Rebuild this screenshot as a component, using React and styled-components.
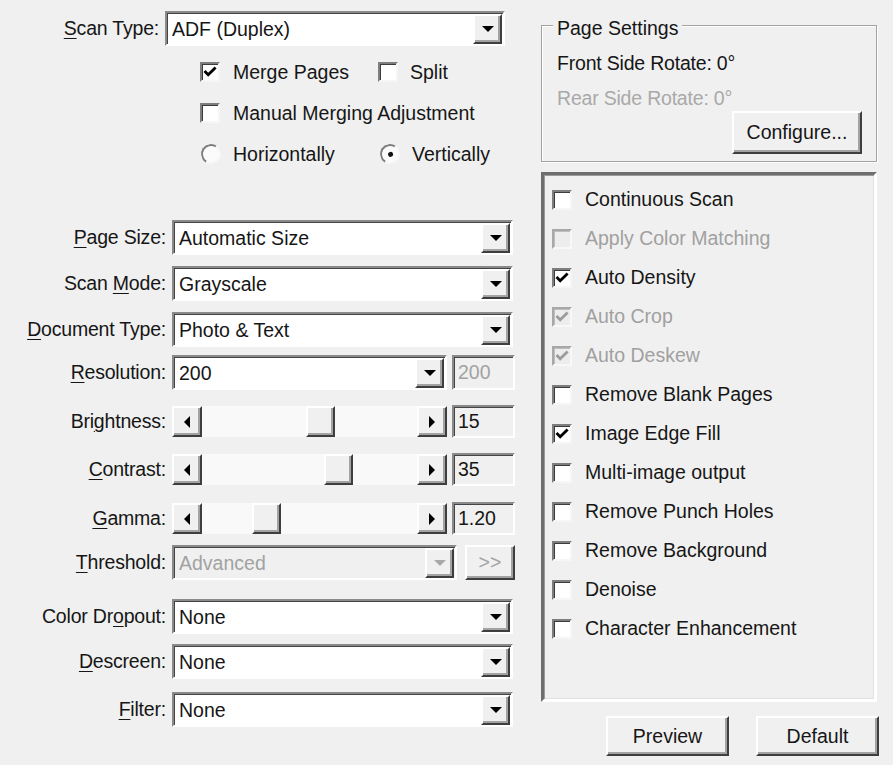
import React from 'react';
import styled, { createGlobalStyle, css } from 'styled-components';

const GlobalStyle = createGlobalStyle`
  html, body {
    margin: 0;
    padding: 0;
    background: #f0f0f0;
  }
  body {
    font-family: "Liberation Sans", Arial, sans-serif;
    font-size: 19.5px;
    color: #161616;
  }
`;

const raised = css`
  box-sizing: border-box;
  background: #f0f0f0;
  border: 2px solid;
  border-color: #ffffff #3e3e3e #3e3e3e #ffffff;
  box-shadow: inset -2px -2px 0 #a3a3a3;
`;

const sunken = css`
  box-sizing: border-box;
  border: 2px solid;
  border-color: #8a8a8a #ffffff #ffffff #8a8a8a;
  box-shadow: inset 1px 1px 0 #444444;
`;

const Dialog = styled.div`
  width: 893px;
  height: 765px;
  display: flex;
  background: #f0f0f0;
  overflow: hidden;
`;

const LeftPane = styled.div`
  width: 520px;
  display: flex;
  flex-direction: column;
`;

const FieldRow = styled.div`
  display: grid;
  grid-template-columns: ${p => p.$labelWidth || 166}px auto;
  column-gap: 6px;
  align-items: center;
  height: ${p => p.$h || 35}px;
  margin-top: ${p => p.$mt || 0}px;
`;

const Label = styled.label`
  text-align: right;
  white-space: nowrap;
  letter-spacing: -0.2px;
  u {
    text-decoration: underline;
    text-underline-offset: 3px;
  }
`;

const Controls = styled.div`
  display: flex;
  align-items: center;
  gap: ${p => p.$gap || 5}px;
  height: 100%;
`;

const ComboBox = styled.div`
  ${sunken};
  width: ${p => p.$width}px;
  height: 35px;
  display: flex;
  align-items: center;
  background: ${p => (p.$disabled ? '#f0f0f0' : '#ffffff')};
  color: ${p => (p.$disabled ? '#a2a2a2' : 'inherit')};
  padding: 1px 1px 0 5px;
`;

const ComboText = styled.span`
  flex: 1;
  white-space: nowrap;
  overflow: hidden;
`;

const ArrowButton = styled.div`
  ${raised};
  width: 29px;
  height: 100%;
  display: flex;
  align-items: center;
  justify-content: center;
`;

const Arrow = styled.span`
  width: 0;
  height: 0;
  ${p =>
    p.$dir === 'left'
      ? css`
          border-top: 6px solid transparent;
          border-bottom: 6px solid transparent;
          border-right: 6px solid #000;
        `
      : p.$dir === 'right'
      ? css`
          border-top: 6px solid transparent;
          border-bottom: 6px solid transparent;
          border-left: 6px solid #000;
        `
      : css`
          border-left: 6px solid transparent;
          border-right: 6px solid transparent;
          border-top: 6px solid ${p.$disabled ? '#a8a8a8' : '#000'};
        `}
`;

const EditBox = styled.div`
  ${sunken};
  width: 63px;
  height: ${p => p.$h || 33}px;
  display: flex;
  align-items: center;
  padding-left: 4px;
  background: #f0f0f0;
  color: ${p => (p.$disabled ? '#a2a2a2' : 'inherit')};
`;

const SliderBar = styled.div`
  width: 275px;
  height: 31px;
  display: flex;
`;

const ScrollButton = styled.div`
  ${raised};
  width: 30px;
  height: 100%;
  display: flex;
  align-items: center;
  justify-content: center;
`;

const Track = styled.div`
  flex: 1;
  position: relative;
  background: #f9f9f9;
`;

const Thumb = styled.div`
  ${raised};
  position: absolute;
  top: 0;
  width: 29px;
  height: 100%;
`;

const PushButton = styled.button`
  ${raised};
  width: ${p => p.$width}px;
  height: ${p => p.$h || 40}px;
  font: inherit;
  color: ${p => (p.$disabled ? '#a5a5a5' : 'inherit')};
  padding: 0;
  display: flex;
  align-items: center;
  justify-content: center;
`;

const OptionRow = styled.div`
  display: flex;
  align-items: center;
  height: 26px;
  padding-left: ${p => p.$indent || 200}px;
  margin-top: ${p => p.$mt || 0}px;
`;

const OptionItem = styled.div`
  display: flex;
  align-items: center;
  gap: ${p => p.$gap || 13}px;
  width: ${p => (p.$width ? `${p.$width}px` : 'auto')};
  white-space: nowrap;
  color: ${p => (p.$disabled ? '#a0a0a0' : 'inherit')};
`;

const Box = styled.span`
  box-sizing: border-box;
  width: 20px;
  height: 20px;
  flex: none;
  display: flex;
  align-items: center;
  justify-content: center;
  background: ${p => (p.$disabled ? '#ededed' : '#ffffff')};
  border: 2px solid;
  border-color: ${p =>
    p.$disabled ? '#a8a8a8 #f8f8f8 #f8f8f8 #a8a8a8' : '#7e7e7e #f6f6f6 #f6f6f6 #7e7e7e'};
  box-shadow: inset 1px 1px 0 ${p => (p.$disabled ? '#bdbdbd' : '#3c3c3c')};
`;

const RadioCircle = styled.span`
  box-sizing: border-box;
  width: 20px;
  height: 20px;
  flex: none;
  border-radius: 50%;
  border: 2px solid;
  border-color: #7e7e7e #f7f7f7 #f7f7f7 #7e7e7e;
  background: #fbfbfb;
  display: flex;
  align-items: center;
  justify-content: center;
  transform: rotate(-12deg);
`;

const Dot = styled.span`
  width: 5px;
  height: 5px;
  border-radius: 50%;
  background: #111;
`;

const RightPane = styled.div`
  width: 338px;
  margin-left: 21px;
  display: flex;
  flex-direction: column;
`;

const GroupBox = styled.div`
  margin: 25px 2px 0 0;
  border: 1px solid #a2a2a2;
  box-shadow: inset 1px 1px 0 #ffffff, 1px 1px 0 #ffffff;
  display: flex;
  flex-direction: column;
  padding: 0 14px 7px 15px;
`;

const GroupTitle = styled.div`
  align-self: flex-start;
  margin: -9px 0 0 -4px;
  padding: 0 4px;
  line-height: 22px;
  background: #f0f0f0;
`;

const InfoLine = styled.div`
  line-height: 24px;
  margin-top: ${p => p.$mt || 0}px;
  color: ${p => (p.$disabled ? '#a9a9a9' : 'inherit')};
  letter-spacing: -0.2px;
`;

const ConfigureRow = styled.div`
  display: flex;
  justify-content: flex-end;
  margin-top: 1px;
`;

const OptionsPanel = styled.div`
  box-sizing: border-box;
  margin: 10px 2px 0 0;
  height: 530px;
  border: 3px solid;
  border-color: #6e6e6e #ffffff #ffffff #6e6e6e;
  box-shadow: inset 1px 1px 0 #9a9a9a, inset -1px -1px 0 #e2e2e2;
  padding: 5px 0 0 8px;
  display: flex;
  flex-direction: column;
`;

const PanelRow = styled.div`
  height: 39px;
  display: flex;
  align-items: center;
`;

const ButtonBar = styled.div`
  display: flex;
  justify-content: flex-end;
  gap: 27px;
  margin-top: 14px;
`;

function CheckMark({ color }) {
  return (
    <svg width="14" height="12" viewBox="0 0 14 12">
      <path d="M1.5 5 L5.2 8.8 L12.6 1.4" fill="none" stroke={color} strokeWidth="2.8" />
    </svg>
  );
}

function Checkbox({ label, checked, disabled, width, gap }) {
  return (
    <OptionItem $disabled={disabled} $width={width} $gap={gap}>
      <Box $disabled={disabled}>
        {checked && <CheckMark color={disabled ? '#9c9c9c' : '#000'} />}
      </Box>
      <span>{label}</span>
    </OptionItem>
  );
}

function Radio({ label, checked, width }) {
  return (
    <OptionItem $width={width} $gap={12}>
      <RadioCircle>{checked && <Dot />}</RadioCircle>
      <span>{label}</span>
    </OptionItem>
  );
}

function Combo({ value, width, disabled }) {
  return (
    <ComboBox $width={width} $disabled={disabled}>
      <ComboText>{value}</ComboText>
      <ArrowButton>
        <Arrow $disabled={disabled} />
      </ArrowButton>
    </ComboBox>
  );
}

function Slider({ pos }) {
  return (
    <SliderBar>
      <ScrollButton>
        <Arrow $dir="left" />
      </ScrollButton>
      <Track>
        <Thumb style={{ left: `calc(${pos} * (100% - 29px))` }} />
      </Track>
      <ScrollButton>
        <Arrow $dir="right" />
      </ScrollButton>
    </SliderBar>
  );
}

const comboFields = [
  { key: 'page', label: <><u>P</u>age Size:</>, value: 'Automatic Size', mt: 53 },
  { key: 'mode', label: <>Scan <u>M</u>ode:</>, value: 'Grayscale', mt: 11 },
  { key: 'doc', label: <><u>D</u>ocument Type:</>, value: 'Photo & Text', mt: 11 },
];

const sliders = [
  { key: 'bright', label: <>Bri<u>g</u>htness:</>, value: '15', pos: 0.56, mt: 15 },
  { key: 'contrast', label: <><u>C</u>ontrast:</>, value: '35', pos: 0.655, mt: 15 },
  { key: 'gamma', label: <><u>G</u>amma:</>, value: '1.20', pos: 0.27, mt: 16 },
];

const filterFields = [
  { key: 'dropout', label: <>Color Dr<u>o</u>pout:</>, value: 'None', mt: 19 },
  { key: 'descreen', label: <><u>D</u>escreen:</>, value: 'None', mt: 10 },
  { key: 'filter', label: <><u>F</u>ilter:</>, value: 'None', mt: 13 },
];

const options = [
  { label: 'Continuous Scan' },
  { label: 'Apply Color Matching', disabled: true },
  { label: 'Auto Density', checked: true },
  { label: 'Auto Crop', checked: true, disabled: true },
  { label: 'Auto Deskew', checked: true, disabled: true },
  { label: 'Remove Blank Pages' },
  { label: 'Image Edge Fill', checked: true },
  { label: 'Multi-image output' },
  { label: 'Remove Punch Holes' },
  { label: 'Remove Background' },
  { label: 'Denoise' },
  { label: 'Character Enhancement' },
];

export default function App() {
  return (
    <>
      <GlobalStyle />
      <Dialog>
        <LeftPane>
          <FieldRow $labelWidth={159} $h={34} $mt={11}>
            <Label><u>S</u>can Type:</Label>
            <Combo value="ADF (Duplex)" width={340} />
          </FieldRow>

          <OptionRow $mt={14}>
            <Checkbox label="Merge Pages" checked width={178} />
            <Checkbox label="Split" gap={12} />
          </OptionRow>
          <OptionRow $mt={15}>
            <Checkbox label="Manual Merging Adjustment" />
          </OptionRow>
          <OptionRow $mt={15} $indent={201}>
            <Radio label="Horizontally" width={179} />
            <Radio label="Vertically" checked />
          </OptionRow>

          {comboFields.map(f => (
            <FieldRow key={f.key} $mt={f.mt}>
              <Label>{f.label}</Label>
              <Combo value={f.value} width={341} />
            </FieldRow>
          ))}

          <FieldRow $mt={8}>
            <Label><u>R</u>esolution:</Label>
            <Controls>
              <Combo value="200" width={275} />
              <EditBox $disabled $h={35}>200</EditBox>
            </Controls>
          </FieldRow>

          {sliders.map(s => (
            <FieldRow key={s.key} $h={33} $mt={s.mt}>
              <Label>{s.label}</Label>
              <Controls>
                <Slider pos={s.pos} />
                <EditBox>{s.value}</EditBox>
              </Controls>
            </FieldRow>
          ))}

          <FieldRow $mt={10}>
            <Label><u>T</u>hreshold:</Label>
            <Controls $gap={8}>
              <Combo value="Advanced" width={285} disabled />
              <PushButton $width={50} $h={35} $disabled>&gt;&gt;</PushButton>
            </Controls>
          </FieldRow>

          {filterFields.map(f => (
            <FieldRow key={f.key} $mt={f.mt}>
              <Label>{f.label}</Label>
              <Combo value={f.value} width={341} />
            </FieldRow>
          ))}
        </LeftPane>

        <RightPane>
          <GroupBox>
            <GroupTitle>Page Settings</GroupTitle>
            <InfoLine $mt={12}>Front Side Rotate: 0°</InfoLine>
            <InfoLine $mt={11} $disabled>Rear Side Rotate: 0°</InfoLine>
            <ConfigureRow>
              <PushButton $width={130} $h={43}>Configure...</PushButton>
            </ConfigureRow>
          </GroupBox>

          <OptionsPanel>
            {options.map(o => (
              <PanelRow key={o.label}>
                <Checkbox label={o.label} checked={o.checked} disabled={o.disabled} gap={13} />
              </PanelRow>
            ))}
          </OptionsPanel>

          <ButtonBar>
            <PushButton $width={123}>Preview</PushButton>
            <PushButton $width={123}>Default</PushButton>
          </ButtonBar>
        </RightPane>
      </Dialog>
    </>
  );
}
